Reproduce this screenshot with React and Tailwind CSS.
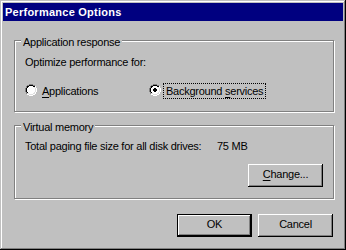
import React from "react";

// classic 12x12 radio bitmap
const RADIO = [
  "....GGGG....",
  "..GGKKKKGG..",
  ".GKKwwwwKKW.",
  ".GKwwwwwwLW.",
  "GKwwwwwwwwLW",
  "GKwwwwwwwwLW",
  "GKwwwwwwwwLW",
  "GKwwwwwwwwLW",
  ".GKwwwwwwLW.",
  ".GLLwwwwLLW.",
  "..WWLLLLWW..",
  "....WWWW....",
];
const DOT = [".KK.", "KKKK", "KKKK", ".KK."];
const COLORS = { G: "#808080", K: "#000000", W: "#ffffff", w: "#ffffff", L: "#dfdfdf" };

function Radio({ checked }) {
  const px = [];
  RADIO.forEach((row, y) =>
    row.split("").forEach((c, x) => {
      if (c !== ".") px.push(<rect key={`r${x}-${y}`} x={x} y={y} width="1" height="1" fill={COLORS[c]} />);
    })
  );
  if (checked) {
    DOT.forEach((row, y) =>
      row.split("").forEach((c, x) => {
        if (c !== ".") px.push(<rect key={`d${x}-${y}`} x={x + 4} y={y + 4} width="1" height="1" fill="#000" />);
      })
    );
  }
  return (
    <svg width="12" height="12" viewBox="0 0 12 12" shapeRendering="crispEdges" className="mt-[1px] shrink-0">
      {px}
    </svg>
  );
}

function GroupBox({ label, className, children }) {
  return (
    <div className={`relative border border-[#808080] shadow-[inset_1px_1px_#fff,1px_1px_#fff] w-[320px] ${className}`}>
      <span className="absolute -top-[5px] left-[6px] bg-[#c0c0c0] px-[2px] leading-[13px]">{label}</span>
      {children}
    </div>
  );
}

function Button({ children, isDefault }) {
  const bevel = isDefault
    ? "border border-black shadow-[inset_-1px_-1px_#000,inset_1px_1px_#fff,inset_-2px_-2px_#808080]"
    : "shadow-[inset_-1px_-1px_#000,inset_1px_1px_#fff,inset_-2px_-2px_#808080,inset_2px_2px_#c0c0c0]";
  return (
    <button className={`w-[75px] h-[23px] bg-[#c0c0c0] flex items-center justify-center pb-[2px] leading-[13px] ${bevel}`}>
      {children}
    </button>
  );
}

export default function App() {
  return (
    <div
      className="w-[346px] h-[250px] bg-[#c0c0c0] p-[3px] flex flex-col text-black text-[11px] leading-[13px] tracking-[-0.25px] shadow-[inset_-1px_-1px_#000,inset_1px_1px_#c0c0c0,inset_-2px_-2px_#808080,inset_2px_2px_#fff]"
      style={{ fontFamily: '"Liberation Sans", Arial, sans-serif' }}
    >
      {/* Title bar */}
      <div className="h-[18px] shrink-0 bg-[#000080] text-white font-bold tracking-[0.25px] flex items-center pl-[2px]">
        Performance Options
      </div>

      {/* Client area */}
      <div className="flex flex-col pl-[11px] pt-[19px]">
        <GroupBox label="Application response" className="h-[72px] pl-[10px] pt-[15px]">
          <div>Optimize performance for:</div>
          <div className="flex mt-[14px]">
            <div className="flex w-[124px]">
              <Radio />
              <span className="ml-[2px] border border-transparent px-[2px] leading-[14px]">
                <span className="underline decoration-1 underline-offset-[2px]">A</span>pplications
              </span>
            </div>
            <div className="flex">
              <Radio checked />
              <span className="ml-[2px] border border-dotted border-black px-[2px] leading-[14px]">
                Background <span className="underline decoration-1 underline-offset-[2px]">s</span>ervices
              </span>
            </div>
          </div>
        </GroupBox>

        <GroupBox label="Virtual memory" className="h-[74px] mt-[13px] pl-[10px] pt-[14px] pr-[10px]">
          <div className="flex">
            <span className="w-[192px]">Total paging file size for all disk drives:</span>
            <span>75 MB</span>
          </div>
          <div className="flex justify-end mt-[11px]">
            <Button>
              <span>
                <span className="underline decoration-1 underline-offset-[2px]">C</span>hange...
              </span>
            </Button>
          </div>
        </GroupBox>

        <div className="w-[320px] flex justify-end gap-[6px] pr-[1px] mt-[15px]">
          <Button isDefault>OK</Button>
          <Button>Cancel</Button>
        </div>
      </div>
    </div>
  );
}
